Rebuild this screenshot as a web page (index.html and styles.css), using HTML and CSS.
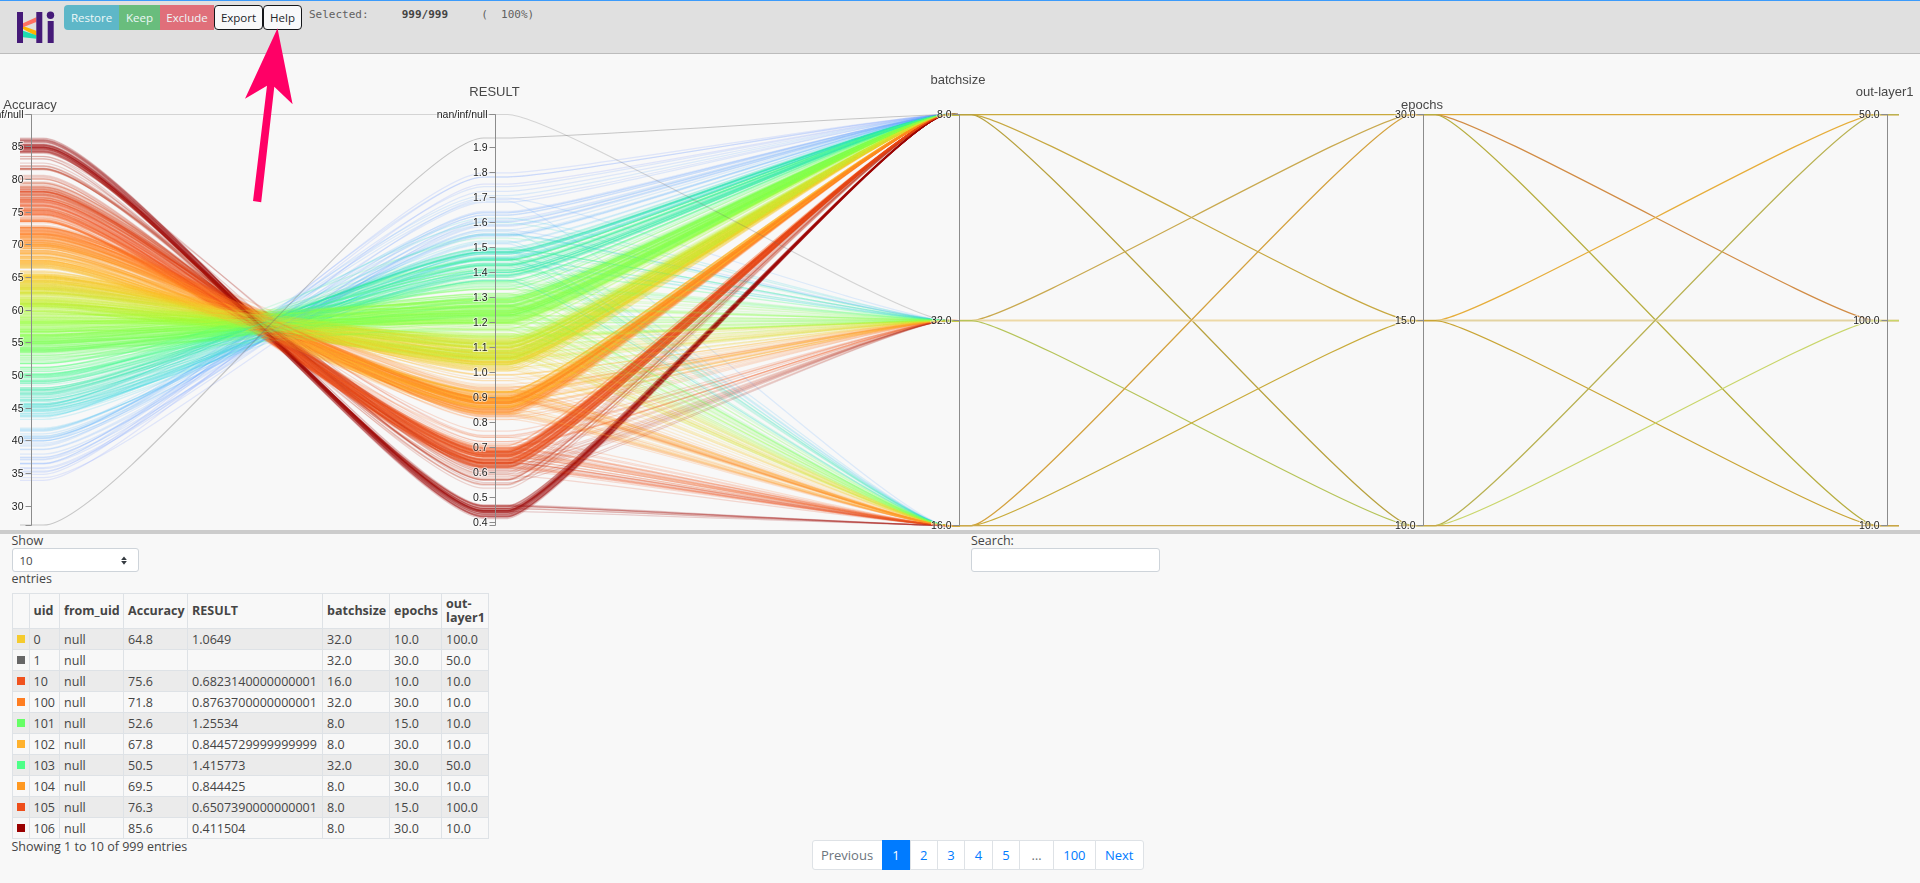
FILE: index.html
```
<!DOCTYPE html>
<html lang="en">
<head>
<meta charset="utf-8">
<title>HiPlot</title>
<link rel="stylesheet" href="styles.css">
</head>
<body>
<header class="toolbar">
  <svg class="logo" viewBox="0 0 42 34" aria-label="HiPlot logo">
    <polygon class="logo-yellow" points="6,15 19.3,19.7 19.3,25 6,18"/>
    <polygon class="logo-salmon" points="6,12.3 6,16.3 19.3,11 19.3,6.3"/>
    <polygon class="logo-teal" points="6,19.7 19.3,24.3 19.3,27.7 6,26.3"/>
    <rect class="logo-ink" x="0" y="1" width="6" height="31"/>
    <rect class="logo-ink" x="19.3" y="1" width="6" height="31"/>
    <rect class="logo-ink" x="30.7" y="10" width="6" height="22"/>
    <circle class="logo-ink" cx="33.5" cy="4.3" r="3.7"/>
  </svg>
  <div class="btn-group">
    <button class="btn btn-restore">Restore</button>
    <button class="btn btn-keep">Keep</button>
    <button class="btn btn-exclude">Exclude</button>
    <button class="btn btn-plain">Export</button>
    <button class="btn btn-plain">Help</button>
  </div>
  <pre class="selected">Selected:     <b>999/999</b>     (  100%)</pre>
  <svg class="arrow" viewBox="0 0 48 175" aria-hidden="true">
    <polygon points="32.5,0.3 47.6,76.3 29.3,58.7 16.2,174.3 8,173 22,57.7 0,70.7"/>
  </svg>
</header>

<section class="plot">
  <canvas id="lines" class="plot-canvas" width="1920" height="476"></canvas>
  <svg id="axes" class="plot-axes" viewBox="0 54 1920 476"></svg>
</section>

<main class="tables">
  <div class="controls">
    <div class="length-control">
      <label class="field-label" for="length">Show</label>
      <div class="select-box" id="length"><span>10</span>
        <svg class="select-caret" viewBox="0 0 8 12" aria-hidden="true"><path d="M4 .5 7.8 5.2H.2zM4 11.5 .2 6.8h7.6z"/></svg>
      </div>
      <div class="field-label">entries</div>
    </div>
    <div class="search-control">
      <label class="field-label" for="search">Search:</label>
      <input id="search" class="search-input" type="text">
    </div>
  </div>

  <table class="data">
    <colgroup>
      <col class="c0"><col class="c1"><col class="c2"><col class="c3"><col class="c4"><col class="c5"><col class="c6"><col class="c7">
    </colgroup>
    <thead>
      <tr><th></th><th>uid</th><th>from_uid</th><th>Accuracy</th><th>RESULT</th><th>batchsize</th><th>epochs</th><th>out-layer1</th></tr>
    </thead>
    <tbody>
      <tr><td><i class="swatch s0"></i></td><td>0</td><td>null</td><td>64.8</td><td>1.0649</td><td>32.0</td><td>10.0</td><td>100.0</td></tr>
      <tr><td><i class="swatch s1"></i></td><td>1</td><td>null</td><td></td><td></td><td>32.0</td><td>30.0</td><td>50.0</td></tr>
      <tr><td><i class="swatch s10"></i></td><td>10</td><td>null</td><td>75.6</td><td>0.6823140000000001</td><td>16.0</td><td>10.0</td><td>10.0</td></tr>
      <tr><td><i class="swatch s100"></i></td><td>100</td><td>null</td><td>71.8</td><td>0.8763700000000001</td><td>32.0</td><td>30.0</td><td>10.0</td></tr>
      <tr><td><i class="swatch s101"></i></td><td>101</td><td>null</td><td>52.6</td><td>1.25534</td><td>8.0</td><td>15.0</td><td>10.0</td></tr>
      <tr><td><i class="swatch s102"></i></td><td>102</td><td>null</td><td>67.8</td><td>0.8445729999999999</td><td>8.0</td><td>30.0</td><td>10.0</td></tr>
      <tr><td><i class="swatch s103"></i></td><td>103</td><td>null</td><td>50.5</td><td>1.415773</td><td>32.0</td><td>30.0</td><td>50.0</td></tr>
      <tr><td><i class="swatch s104"></i></td><td>104</td><td>null</td><td>69.5</td><td>0.844425</td><td>8.0</td><td>30.0</td><td>10.0</td></tr>
      <tr><td><i class="swatch s105"></i></td><td>105</td><td>null</td><td>76.3</td><td>0.6507390000000001</td><td>8.0</td><td>15.0</td><td>100.0</td></tr>
      <tr><td><i class="swatch s106"></i></td><td>106</td><td>null</td><td>85.6</td><td>0.411504</td><td>8.0</td><td>30.0</td><td>10.0</td></tr>
    </tbody>
  </table>

  <div class="footer-row">
    <div class="info">Showing 1 to 10 of 999 entries</div>
    <nav class="pagination">
      <a class="page page-prev">Previous</a>
      <a class="page page-active">1</a>
      <a class="page">2</a>
      <a class="page">3</a>
      <a class="page">4</a>
      <a class="page">5</a>
      <a class="page page-gap">…</a>
      <a class="page">100</a>
      <a class="page page-next">Next</a>
    </nav>
  </div>
</main>
<script src="plot.js"></script>
</body>
</html>
```
FILE: styles.css
```
* { box-sizing: border-box; }
html, body { margin: 0; padding: 0; }
body {
  background: #f8f8f8;
  color: #454545;
  font-family: "Open Sans", "Noto Sans", sans-serif;
  font-size: 12.5px;
  height: 883px;
  overflow: hidden;
}

/* toolbar */
.toolbar {
  position: relative;
  display: flex;
  align-items: flex-start;
  height: 54px;
  background: #e0e0e0;
  border-top: 1px solid #3b9bfb;
  border-bottom: 1px solid #bcbcbc;
  padding-left: 17px;
}
.logo { width: 42px; height: 34px; margin-top: 10px; margin-right: 5px; }
.logo-ink { fill: #451a78; }
.logo-salmon { fill: #ff6f61; }
.logo-yellow { fill: #ffb400; }
.logo-teal { fill: #1fdcae; }
.btn-group { display: flex; margin-top: 4px; }
.btn {
  height: 25px;
  padding: 0;
  border: 1px solid transparent;
  font: 11.5px "Open Sans", "Noto Sans", sans-serif;
  color: #eef7f8;
}
.btn-restore { width: 55px; background: #5eb7c8; border-radius: 4px 0 0 4px; }
.btn-keep { width: 41px; background: #69bd7d; }
.btn-exclude { width: 54px; background: #e06f7a; }
.btn-plain { background: #f8f9fa; color: #212529; border: 1px solid #15171a; border-radius: 4px; }
.btn-plain:nth-child(4) { width: 49px; }
.btn-plain:nth-child(5) { width: 39px; }
.selected {
  margin: 7px 0 0 7px;
  font: 11px/14px "DejaVu Sans Mono", monospace;
  color: #606060;
}
.selected b { color: #444; }
.arrow {
  position: absolute;
  left: 245px;
  top: 27px;
  width: 48px;
  height: 175px;
  overflow: visible;
  z-index: 3;
  fill: #ff0066;
}

/* parallel plot */
.plot { position: relative; height: 476px; overflow: hidden; }
.plot-canvas { display: block; width: 1920px; height: 476px; }
.plot-axes { position: absolute; left: 0; top: 0; width: 1920px; height: 476px; }
.axis-line { fill: none; stroke: #8c8c8c; stroke-width: 1; }
.axis-tick { stroke: #8c8c8c; stroke-width: 1; }
.axis-label {
  font: 10.5px "Liberation Sans", Arial, sans-serif;
  fill: #222;
  text-anchor: end;
  paint-order: stroke;
  stroke: rgba(255, 255, 255, .55);
  stroke-width: 2px;
}
.axis-title {
  font: 13px "Liberation Sans", Arial, sans-serif;
  fill: #484848;
  text-anchor: middle;
}

/* lower part */
.tables { border-top: 4px solid #cccccc; padding: 0 11.5px; }
.controls { display: flex; }
.length-control { width: 959.5px; }
.search-control { width: 189px; }
.field-label { display: block; height: 14px; line-height: 14px; }
.select-box {
  display: flex;
  justify-content: space-between;
  align-items: center;
  width: 127px;
  height: 24px;
  padding: 0 10.5px 0 7px;
  background: #fff;
  border: 1px solid #ced4da;
  border-radius: 3px;
  font-size: 11.5px;
}
.select-caret { width: 6px; height: 9px; fill: #343a40; }
.search-input {
  display: block;
  width: 189px;
  height: 24px;
  background: #fff;
  border: 1px solid #ced4da;
  border-radius: 3px;
}

.data {
  table-layout: fixed;
  border-collapse: collapse;
  width: 477px;
  margin-top: 7px;
}
.c0 { width: 17px; } .c1 { width: 30.6px; } .c2 { width: 64px; } .c3 { width: 64px; }
.c4 { width: 135px; } .c5 { width: 67px; } .c6 { width: 52px; } .c7 { width: 47px; }
.data th, .data td { border: 1px solid #dee2e6; padding: 0 0 0 4px; vertical-align: middle; text-align: left; white-space: nowrap; }
.data th { height: 35px; font-weight: 700; line-height: 14px; white-space: normal; }
.data td { height: 21px; line-height: 19px; }
.data tbody tr:nth-child(odd) { background: #ebebeb; }
.swatch { display: block; width: 8px; height: 8px; }
.s0 { background: #f5cb2e; } .s1 { background: #666666; } .s10 { background: #f0521e; }
.s100 { background: #ff7e22; } .s101 { background: #66ff66; } .s102 { background: #ffb22e; }
.s103 { background: #4dff88; } .s104 { background: #ff9922; } .s105 { background: #ee4d1a; }
.s106 { background: #990000; }

.footer-row { display: flex; align-items: flex-start; }
.info { width: 800px; height: 14px; line-height: 14px; margin-top: 1px; }
.pagination { display: flex; height: 29.5px; margin-top: 1px; font-size: 13px; }
.page {
  display: flex;
  align-items: center;
  justify-content: center;
  height: 100%;
  width: 28.4px;
  margin-left: -1px;
  background: #fff;
  border: 1px solid #dee2e6;
  color: #007bff;
}
.page-prev { width: 71px; margin-left: 0; color: #6c757d; border-radius: 3px 0 0 3px; }
.page-active { width: 29px; background: #007bff; border-color: #007bff; color: #fff; }
.page-gap { width: 35px; color: #6c757d; }
.page:nth-child(8) { width: 42.6px; }
.page-next { width: 49px; border-radius: 0 3px 3px 0; }
```
FILE: plot.js
```
(function () {
  var AXES = [31.5, 495.5, 959.5, 1423.5, 1887.5];
  var TOP = 114.5, MID = 320.5, BOT = 525.5;
  var accY = function (v) { return 506 - (v - 30) * 6.53; };
  var resY = function (v) { return 522 - (v - 0.4) * 249.7; };

  /* ---------- axes (real text in SVG) ---------- */
  var svg = document.getElementById('axes');
  var NS = 'http://www.w3.org/2000/svg';
  function el(name, attrs, text) {
    var n = document.createElementNS(NS, name);
    for (var k in attrs) n.setAttribute(k, attrs[k]);
    if (text !== undefined) n.textContent = text;
    svg.appendChild(n);
    return n;
  }
  function ticksFor(list, digits, yOf) {
    return list.map(function (v) { return [v.toFixed(digits), yOf(v)]; });
  }
  var accTicks = [[ 'nan/inf/null', 114.5 ]].concat(ticksFor([85, 80, 75, 70, 65, 60, 55, 50, 45, 40, 35, 30], 0, accY));
  var resTicks = [[ 'nan/inf/null', 114.5 ]].concat(ticksFor([1.9, 1.8, 1.7, 1.6, 1.5, 1.4, 1.3, 1.2, 1.1, 1.0, 0.9, 0.8, 0.7, 0.6, 0.5, 0.4], 1, resY));
  var spec = [
    { title: 'Accuracy', tx: 30, ty: 109, ticks: accTicks },
    { title: 'RESULT', tx: 494.5, ty: 96, ticks: resTicks },
    { title: 'batchsize', tx: 958, ty: 84, ticks: [['8.0', TOP], ['32.0', MID], ['16.0', BOT]] },
    { title: 'epochs', tx: 1422, ty: 109, ticks: [['30.0', TOP], ['15.0', MID], ['10.0', BOT]] },
    { title: 'out-layer1', tx: 1884.7, ty: 96, ticks: [['50.0', TOP], ['100.0', MID], ['10.0', BOT]] }
  ];
  spec.forEach(function (a, i) {
    var x = AXES[i];
    el('path', { 'class': 'axis-line', d: 'M' + (x - 6) + ' ' + TOP + 'H' + x + 'V' + BOT + 'H' + (x - 6) });
    el('text', { 'class': 'axis-title', x: a.tx, y: a.ty }, a.title);
    a.ticks.forEach(function (t) {
      var y = Math.round(t[1] - 0.5) + 0.5;
      el('line', { 'class': 'axis-tick', x1: x - 6, x2: x, y1: y, y2: y });
      el('text', { 'class': 'axis-label', x: x - 8, y: y + 3.5 }, t[0]);
    });
  });

  /* ---------- polylines on the canvas ---------- */
  var ctx = document.getElementById('lines').getContext('2d');
  ctx.translate(0, -54);
  var seed = 20200406;
  function rnd() {
    seed |= 0; seed = seed + 0x6D2B79F5 | 0;
    var t = Math.imul(seed ^ seed >>> 15, 1 | seed);
    t = t + Math.imul(t ^ t >>> 7, 61 | t) ^ t;
    return ((t ^ t >>> 14) >>> 0) / 4294967296;
  }

  var STOPS = [
    [27, 136, 136, 230], [34, 110, 140, 255], [40, 90, 170, 255], [44, 40, 210, 225], [47, 35, 225, 175],
    [50.5, 77, 255, 136], [52.6, 102, 255, 102], [58, 150, 255, 60], [62, 205, 235, 50], [64.8, 245, 203, 46],
    [67.8, 255, 178, 46], [69.5, 255, 153, 34], [71.8, 255, 126, 34], [75.6, 240, 82, 30], [76.3, 238, 77, 26],
    [80, 200, 50, 16], [83, 170, 25, 8], [85.6, 153, 0, 0], [87, 150, 0, 0]
  ];
  function colorOf(acc) {
    for (var i = 1; i < STOPS.length; i++) {
      if (acc <= STOPS[i][0]) {
        var a = STOPS[i - 1], b = STOPS[i], f = (acc - a[0]) / (b[0] - a[0]);
        return [1, 2, 3].map(function (c) { return Math.round(a[c] + (b[c] - a[c]) * f); });
      }
    }
    return STOPS[STOPS.length - 1].slice(1);
  }

  var FLAT = 12;
  function segment(x0, y0, x1, y1, soft) {
    ctx.lineTo(x0 + FLAT, y0);
    ctx.bezierCurveTo(x0 + FLAT + soft, y0, x1 - FLAT - soft, y1, x1 - FLAT, y1);
    ctx.lineTo(x1, y1);
  }
  function polyline(ya, yr, yb, stroke, width) {
    ctx.beginPath();
    ctx.moveTo(20, ya);
    ctx.lineTo(AXES[0], ya);
    segment(AXES[0], ya, AXES[1], yr, 70);
    segment(AXES[1], yr, AXES[2], yb, 50);
    ctx.strokeStyle = stroke;
    ctx.lineWidth = width;
    ctx.stroke();
  }

  /* groups: [count, accLow, accHigh, resLow, resHigh, batchY] — result falls as accuracy rises */
  var GROUPS = [
    [28, 33.3, 43, 1.5, 1.82, TOP],
    [78, 43.7, 52, 1.33, 1.52, TOP],
    [150, 53, 59.5, 1.16, 1.34, TOP],
    [180, 59.5, 65.5, 1.0, 1.16, TOP],
    [140, 66.5, 73, 0.82, 0.93, TOP],
    [95, 73.5, 79.5, 0.6, 0.72, TOP],
    [12, 80, 84, 0.5, 0.62, TOP],
    [46, 84, 86.4, 0.4, 0.47, TOP],
    [6, 38, 44, 1.38, 1.8, MID],
    [14, 44, 52, 1.3, 1.62, MID],
    [34, 52, 60, 1.1, 1.38, MID],
    [26, 60, 66, 0.98, 1.18, MID],
    [30, 66, 73, 0.8, 1.02, MID],
    [14, 73, 80, 0.62, 0.86, MID],
    [8, 80, 85, 0.5, 0.72, MID],
    [4, 38, 44, 1.42, 1.75, BOT],
    [10, 44, 52, 1.3, 1.5, BOT],
    [22, 52, 60, 1.1, 1.36, BOT],
    [26, 60, 66, 0.98, 1.18, BOT],
    [36, 66, 73, 0.78, 1.0, BOT],
    [32, 73.5, 79, 0.58, 0.76, BOT],
    [8, 83, 86, 0.43, 0.49, BOT]
  ];
  var rows = [];
  GROUPS.forEach(function (g) {
    for (var i = 0; i < g[0]; i++) {
      var t = rnd(), acc = g[1] + (g[2] - g[1]) * t;
      var res = g[4] - (g[4] - g[3]) * (0.35 * t + 0.65 * rnd());
      rows.push({ acc: acc, res: res, by: g[5] });
    }
  });
  for (var i = rows.length - 1; i > 0; i--) {
    var j = Math.floor(rnd() * (i + 1)), tmp = rows[i];
    rows[i] = rows[j]; rows[j] = tmp;
  }
  rows.forEach(function (r) {
    var c = colorOf(r.acc);
    polyline(accY(r.acc), resY(r.res), r.by, 'rgba(' + c.join(',') + ',.18)', 1.25);
  });

  /* the two rows with a gray colour */
  polyline(525, 138, TOP, 'rgba(110,110,110,.36)', 1.1);
  polyline(TOP, TOP, MID, 'rgba(110,110,110,.26)', 1.1);

  /* batchsize → epochs → out-layer1: few combinations, all lines overlap */
  function link(i, y0, y1, color, width) {
    ctx.beginPath();
    ctx.moveTo(AXES[i], y0);
    segment(AXES[i], y0, AXES[i + 1], y1, 42);
    if (i === 3) ctx.lineTo(1899, y1);
    ctx.strokeStyle = color;
    ctx.lineWidth = width || 1.25;
    ctx.stroke();
  }
  [
    [2, TOP, TOP, '#c9a93b'], [2, TOP, MID, '#c7a841'], [2, TOP, BOT, '#b8a23f'],
    [2, MID, TOP, '#c9a94f'], [2, MID, MID, '#edd9a7', 2], [2, MID, BOT, '#b6c459'],
    [2, BOT, TOP, '#d4a23f'], [2, BOT, MID, '#c9ab3a'], [2, BOT, BOT, '#cba94c'],
    [3, TOP, TOP, '#dba838'], [3, TOP, MID, '#d18c45'], [3, TOP, BOT, '#b7ae40'],
    [3, MID, TOP, '#e6ad3a'], [3, MID, MID, '#e3d3a2', 2], [3, MID, BOT, '#c9a535'],
    [3, BOT, TOP, '#b9b253'], [3, BOT, MID, '#c9d66b'], [3, BOT, BOT, '#c9a546']
  ].forEach(function (l) { link(l[0], l[1], l[2], l[3], l[4]); });
})();
```
